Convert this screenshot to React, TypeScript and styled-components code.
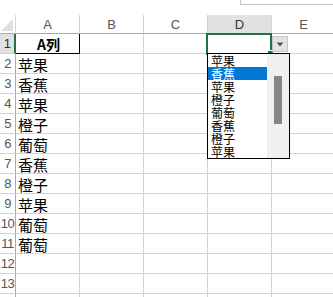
import { FC, Fragment } from "react";
import styled, { createGlobalStyle } from "styled-components";

const GlobalStyle = createGlobalStyle`
    html, body {
        margin: 0;
        padding: 0;
        background: #ffffff;
    }
    body {
        font-family: "Liberation Sans", "Noto Sans CJK SC", sans-serif;
        overflow: hidden;
    }
`;

const columns = ["A", "B", "C", "D", "E"];
const fruits = ["苹果", "香蕉", "苹果", "橙子", "葡萄", "香蕉", "橙子", "苹果", "葡萄", "葡萄"];
const listItems = ["苹果", "香蕉", "苹果", "橙子", "葡萄", "香蕉", "橙子", "苹果"];

const Sheet = styled.div`
    position: relative;
    width: 333px;
    height: 297px;
    overflow: hidden;
`;

const TopStrip = styled.div`
    height: 15px;
    display: flex;
`;

const FormulaBarEdge = styled.div`
    margin-left: 240px;
    flex: 1;
    height: 4px;
    border-left: 1px solid #c6c6c6;
    border-bottom: 1px solid #c6c6c6;
`;

const Grid = styled.div`
    position: relative;
    display: grid;
    grid-template-columns: 16px repeat(5, 64px);
    grid-template-rows: 19px repeat(14, 20px);
`;

interface HeadProps {
    $active?: boolean;
}

const Corner = styled.div`
    position: relative;
    border-right: 1px solid #d4d4d4;
    border-bottom: 1px solid #ababab;
    box-sizing: border-box;
`;

const CornerTriangle = styled.div`
    position: absolute;
    right: 2px;
    bottom: 2px;
    width: 0;
    height: 0;
    border-left: 12px solid transparent;
    border-bottom: 12px solid #dfdfdf;
`;

const ColHead = styled.div<HeadProps>`
    box-sizing: border-box;
    display: flex;
    align-items: center;
    justify-content: center;
    font-size: 13px;
    color: ${p => (p.$active ? "#333" : "#555")};
    background: ${p => (p.$active ? "#e1e1e1" : "#ffffff")};
    border-right: 1px solid #d4d4d4;
    border-bottom: 1px solid ${p => (p.$active ? "#217346" : "#ababab")};
`;

const RowHead = styled.div<HeadProps>`
    box-sizing: border-box;
    display: flex;
    align-items: center;
    justify-content: center;
    overflow: hidden;
    font-size: 13px;
    letter-spacing: -0.5px;
    color: ${p => (p.$active ? "#333" : "#555")};
    background: ${p => (p.$active ? "#e1e1e1" : "#ffffff")};
    border-right: ${p => (p.$active ? "2px solid #217346" : "1px solid #ababab")};
    border-bottom: 1px solid #d4d4d4;
`;

interface CellProps {
    $header?: boolean;
}

const Cell = styled.div<CellProps>`
    box-sizing: border-box;
    display: flex;
    align-items: center;
    justify-content: ${p => (p.$header ? "center" : "flex-start")};
    padding: 1px 0 0 2px;
    font-family: "Noto Sans CJK SC", sans-serif;
    font-size: ${p => (p.$header ? "14px" : "15px")};
    font-weight: ${p => (p.$header ? 700 : 400)};
    color: #000;
    border-right: 1px solid ${p => (p.$header ? "#000" : "#d4d4d4")};
    border-bottom: 1px solid ${p => (p.$header ? "#000" : "#d4d4d4")};
    white-space: nowrap;
`;

const Selection = styled.div`
    position: absolute;
    left: 206px;
    top: 18px;
    width: 66px;
    height: 22px;
    box-sizing: border-box;
    border: 2px solid #217346;
    pointer-events: none;
`;

const FillHandle = styled.div`
    position: absolute;
    right: -4px;
    bottom: -4px;
    width: 5px;
    height: 5px;
    background: #217346;
    border: 1px solid #fff;
`;

const DropButton = styled.div`
    position: absolute;
    left: 272px;
    top: 21px;
    width: 16px;
    height: 16px;
    box-sizing: border-box;
    background: #e3e3e3;
    border: 1px solid #c4c4c4;
    display: flex;
    align-items: center;
    justify-content: center;
`;

const DropList = styled.div`
    position: absolute;
    left: 207px;
    top: 38px;
    width: 83px;
    height: 106px;
    box-sizing: border-box;
    border: 1px solid #000;
    background: #fff;
    display: flex;
`;

const Items = styled.div`
    flex: 1;
    display: flex;
    flex-direction: column;
`;

interface ItemProps {
    $selected?: boolean;
}

const Item = styled.div<ItemProps>`
    height: 13px;
    display: flex;
    align-items: center;
    overflow: hidden;
    padding-left: 3px;
    font-family: "Noto Sans CJK SC", sans-serif;
    font-size: 12px;
    line-height: 12px;
    color: ${p => (p.$selected ? "#fff" : "#000")};
    background: ${p => (p.$selected ? "#0078d7" : "transparent")};
`;

const ScrollTrack = styled.div`
    width: 22px;
    background: #f0f0f0;
    display: flex;
    justify-content: center;
    padding-top: 22px;
    box-sizing: border-box;
`;

const ScrollThumb = styled.div`
    width: 8px;
    height: 48px;
    background: #868686;
`;

const cellText = (col: string, row: number) => {
    if (col !== "A") return "";
    if (row === 0) return "A列";
    return fruits[row - 1] ?? "";
};

const App: FC = () => (
    <Sheet>
        <GlobalStyle />
        <TopStrip>
            <FormulaBarEdge />
        </TopStrip>
        <Grid>
            <Corner>
                <CornerTriangle />
            </Corner>
            {columns.map(c => (
                <ColHead key={c} $active={c === "D"}>{c}</ColHead>
            ))}
            {Array.from({ length: 14 }, (_, r) => (
                <Fragment key={r}>
                    <RowHead $active={r === 0}>{r < 13 ? r + 1 : ""}</RowHead>
                    {columns.map(c => (
                        <Cell key={c} $header={r === 0 && c === "A"}>
                            {cellText(c, r)}
                        </Cell>
                    ))}
                </Fragment>
            ))}
            <Selection>
                <FillHandle />
            </Selection>
            <DropButton>
                <svg width="8" height="5" viewBox="0 0 8 5">
                    <path d="M0.5 0.5 L7.5 0.5 L4 4.5 Z" fill="#555" />
                </svg>
            </DropButton>
            <DropList>
                <Items>
                    {listItems.map((t, i) => (
                        <Item key={i} $selected={i === 1}>{t}</Item>
                    ))}
                </Items>
                <ScrollTrack>
                    <ScrollThumb />
                </ScrollTrack>
            </DropList>
        </Grid>
    </Sheet>
);

export default App;
